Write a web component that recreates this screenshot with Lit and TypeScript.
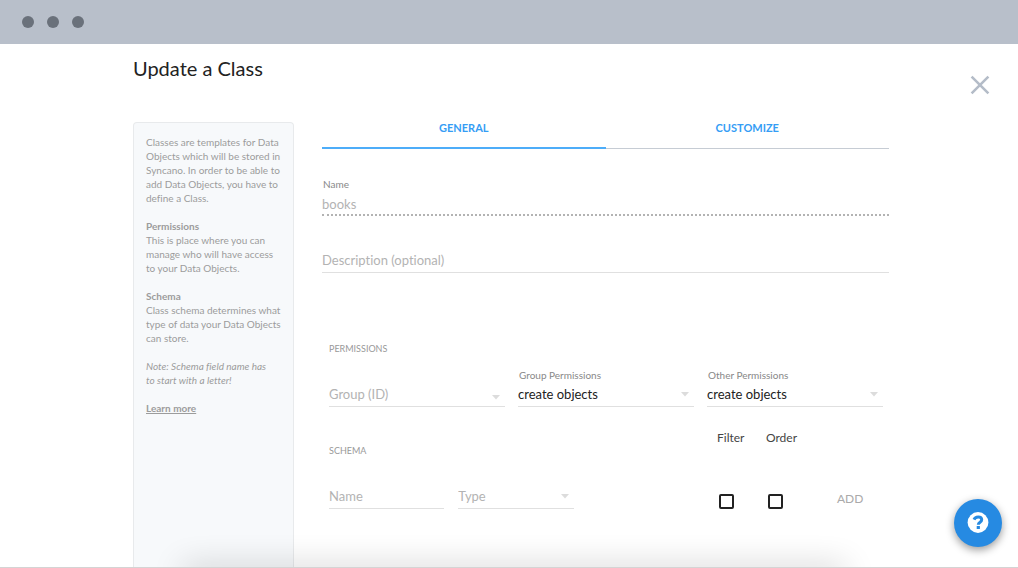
import { LitElement, html, css } from "lit";
import { customElement, state } from "lit/decorators.js";

@customElement("app-root")
export class AppRoot extends LitElement {
  @state() private tab = "general";

  static styles = css`
    :host {
      display: flex;
      flex-direction: column;
      position: relative;
      box-sizing: border-box;
      min-height: 100vh;
      overflow: hidden;
      background: #fff;
      border-bottom: 1px solid #d4d4d4;
      color: #222;
      font-family: Lato, "Open Sans", sans-serif;
      font-size: 10px;
      line-height: 14px;
      font-variant-ligatures: none;
    }
    * { box-sizing: border-box; }
    button, input, select {
      margin: 0;
      padding: 0;
      border: 0;
      border-radius: 0;
      background: none;
      color: inherit;
      font: inherit;
      font-variant-ligatures: none;
      appearance: none;
      outline-offset: 2px;
    }
    button, select { cursor: pointer; }
    h1, h2, p { margin: 0; font-weight: 400; }

    .chrome {
      display: flex;
      align-items: center;
      gap: 13px;
      height: 44px;
      padding: 0 22px;
      background: #b8bfca;
    }
    .dot { width: 12px; height: 12px; border-radius: 50%; background: #6a717b; }

    .top {
      display: flex;
      justify-content: space-between;
      align-items: flex-start;
      padding: 12px 26px 25px 133px;
    }
    .title { font-size: 20px; line-height: 24px; }
    .close { margin-top: 17px; height: 24px; color: #b4bcc8; }
    .close svg, .help svg { display: block; }

    .body {
      flex: 1;
      display: grid;
      grid-template-columns: 161px minmax(0, 1fr);
      gap: 28px;
      padding: 0 129px 0 133px;
    }
    .info {
      display: flex;
      flex-direction: column;
      gap: 14px;
      padding: 12px;
      border: 1px solid #e8eaec;
      border-bottom: 0;
      border-radius: 4px 4px 0 0;
      background: #f7f9fb;
      color: #9c9c9c;
    }
    .info strong { display: block; font-weight: 700; }
    .info a { color: inherit; font-weight: 700; }

    .tabs { display: grid; grid-template-columns: 1fr 1fr; }
    .tab {
      height: 27px;
      padding-bottom: 15px;
      box-shadow: inset 0 -1px #c6ccd4;
      color: #359df5;
      font-size: 11px;
      font-weight: 700;
      line-height: 12px;
    }
    .tab.active { box-shadow: inset 0 -2px #4dadf9; }

    .field { display: flex; flex-direction: column; min-width: 0; }
    .field label { padding-left: 1px; line-height: 12px; color: #888; }
    .control {
      width: 100%;
      height: 23px;
      padding-bottom: 2px;
      border-bottom: 1px solid #e0e0e0;
      font-size: 13px;
      line-height: 20px;
    }
    .control::placeholder { color: #b3b3b3; opacity: 1; }
    .control.empty { color: #b3b3b3; }
    .name { margin-top: 29px; gap: 4px; }
    .name .control {
      height: 22px;
      padding: 0;
      border-bottom: 2px dotted #b3b3b3;
      color: #b3b3b3;
    }
    .description { margin-top: 34px; }

    .arrow {
      background: url("data:image/svg+xml,%3Csvg xmlns='http://www.w3.org/2000/svg' width='8' height='5'%3E%3Cpath d='M0 0h8L4 4.5z' fill='%23dcdcdc'/%3E%3C/svg%3E") no-repeat right 5px top 8px;
    }
    .arrow.low { background-position: right 5px top 11px; }

    .section { padding: 0 6px 0 7px; }
    .permissions { margin-top: 70px; }
    .schema { margin-top: 24px; }
    .heading { font-size: 9px; line-height: 12px; color: #999; }
    .row {
      display: grid;
      grid-template-columns: repeat(3, minmax(0, 1fr));
      align-items: end;
      gap: 13px;
      margin-top: 14px;
    }
    .row .field { gap: 3px; }
    .grid {
      display: grid;
      grid-template-columns: repeat(3, minmax(0, 1fr)) 35px 57px 46px;
      column-gap: 14px;
      row-gap: 29px;
      align-items: end;
    }
    .grid .heading { grid-column: 1 / 4; }
    .grid label { align-self: start; height: 26px; font-size: 12px; line-height: 14px; color: #444; }
    .tick {
      grid-column: 4;
      width: 15px;
      height: 15px;
      margin-left: 2px;
      border: 2px solid #222;
      border-radius: 2px;
      cursor: pointer;
    }
    .tick.order { grid-column: 5; }
    .tick:checked { background: #2c98f0; }
    .add { justify-self: start; color: #aaa; font-size: 12px; line-height: 20px; }

    .shade {
      position: absolute;
      right: 17%;
      bottom: -10px;
      left: 18%;
      height: 10px;
      box-shadow: 0 2px 32px rgba(0, 0, 0, 0.32);
      pointer-events: none;
    }
    .help {
      position: absolute;
      right: 16px;
      bottom: 20px;
      display: grid;
      place-items: center;
      width: 48px;
      height: 48px;
      border-radius: 50%;
      background: #268ae2;
      box-shadow: 0 3px 8px rgba(0, 0, 0, 0.4);
    }
  `;

  private renderTab(id: string, label: string) {
    const active = this.tab === id;
    return html`<button class="tab ${active ? "active" : ""}" role="tab" aria-selected=${active}
      @click=${() => (this.tab = id)}>${label}</button>`;
  }

  render() {
    return html`
      <div class="chrome"><span class="dot"></span><span class="dot"></span><span class="dot"></span></div>
      <header class="top">
        <h1 class="title">Update a Class</h1>
        <button class="close" aria-label="Close">
          <svg width="24" height="24" viewBox="0 0 24 24" fill="none" stroke="currentColor" stroke-width="2.6">
            <path d="M3.6 3.6l16.8 16.8M20.4 3.6L3.6 20.4" />
          </svg>
        </button>
      </header>
      <div class="body">
        <aside class="info">
          <p>Classes are templates for Data Objects which will be stored in Syncano. In order to be able to add Data Objects, you have to define a Class.</p>
          <p><strong>Permissions</strong>This is place where you can manage who will have access to your Data Objects.</p>
          <p><strong>Schema</strong>Class schema determines what type of data your Data Objects can store.</p>
          <p><em>Note: Schema field name has<br />to start with a letter!</em></p>
          <p><a href="#">Learn more</a></p>
        </aside>
        <main>
          <div class="tabs" role="tablist">
            ${this.renderTab("general", "GENERAL")}${this.renderTab("customize", "CUSTOMIZE")}
          </div>
          <div class="field name">
            <label for="name">Name</label>
            <input class="control" id="name" value="books" readonly />
          </div>
          <div class="field description">
            <input class="control" aria-label="Description" placeholder="Description (optional)" />
          </div>
          <section class="section permissions">
            <h2 class="heading">PERMISSIONS</h2>
            <div class="row">
              <div class="field">
                <select class="control arrow low empty" aria-label="Group"><option>Group (ID)</option></select>
              </div>
              <div class="field">
                <label for="group-perm">Group Permissions</label>
                <select class="control arrow" id="group-perm"><option>create objects</option></select>
              </div>
              <div class="field">
                <label for="other-perm">Other Permissions</label>
                <select class="control arrow" id="other-perm"><option>create objects</option></select>
              </div>
            </div>
          </section>
          <section class="section schema">
            <div class="grid">
              <h2 class="heading">SCHEMA</h2>
              <label for="filter">Filter</label>
              <label for="order">Order</label>
              <span></span>
              <input class="control" aria-label="Field name" placeholder="Name" />
              <select class="control arrow empty" aria-label="Field type"><option>Type</option></select>
              <input class="tick" type="checkbox" id="filter" />
              <input class="tick order" type="checkbox" id="order" />
              <button class="add">ADD</button>
            </div>
          </section>
        </main>
      </div>
      <div class="shade"></div>
      <button class="help" aria-label="Help">
        <svg width="22" height="22" viewBox="0 0 22 22">
          <circle cx="11" cy="10.5" r="10.4" fill="#fff" />
          <path d="M7 7.6C7.8 5.6 9.2 5 11.2 5c2.1 0 3.5 1.1 3.5 2.8 0 2.5-3.4 2.2-3.4 4.9" fill="none" stroke="#268ae2" stroke-width="3" />
          <path d="M9.7 14h3.2v3H9.7z" fill="#268ae2" />
        </svg>
      </button>
    `;
  }
}
